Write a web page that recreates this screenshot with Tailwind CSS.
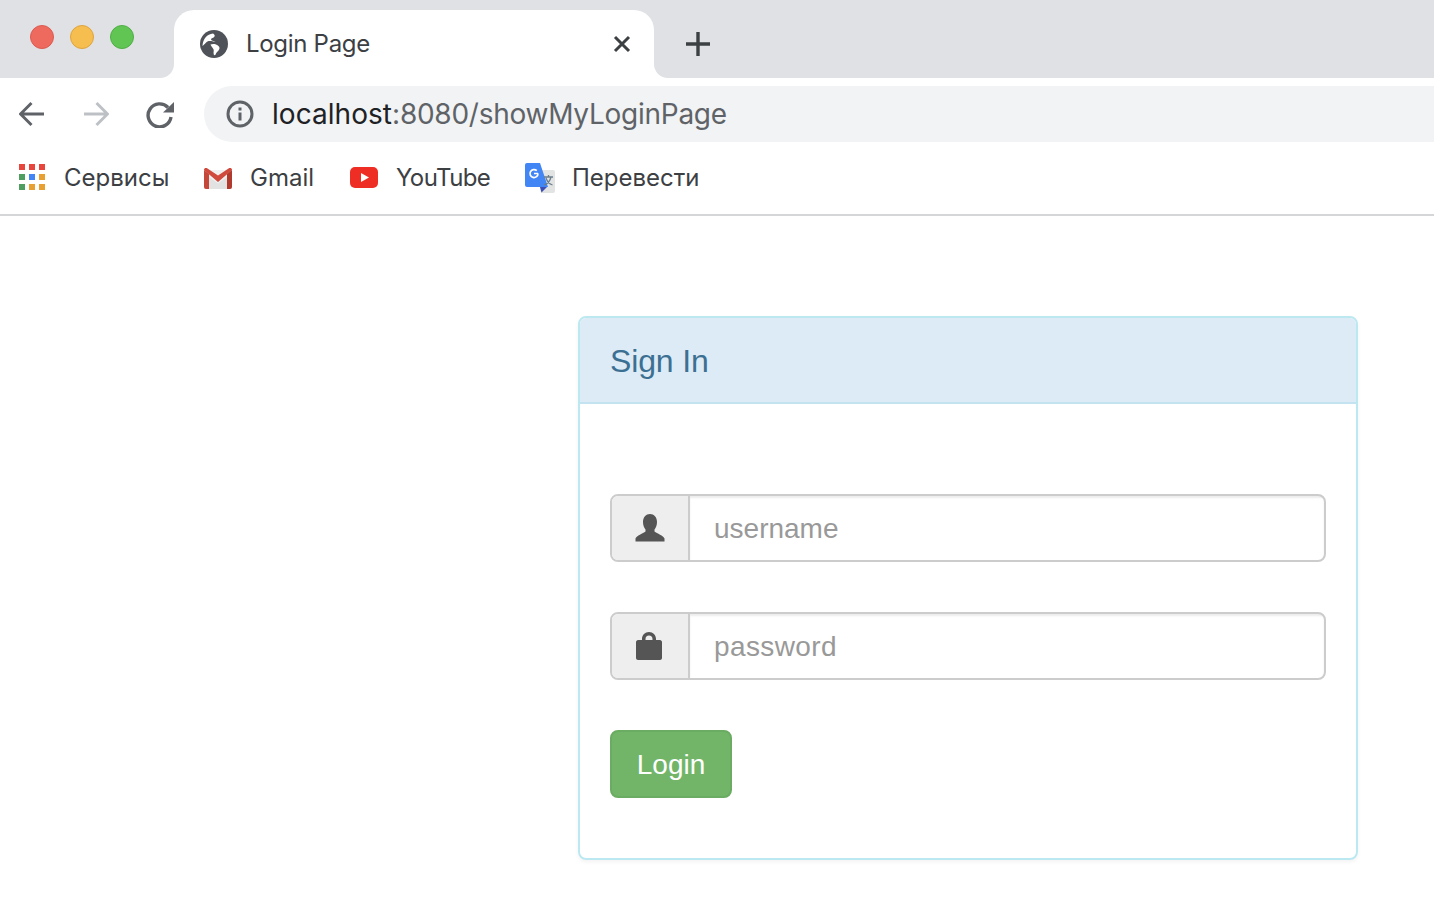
<!DOCTYPE html>
<html lang="en">
<head>
    <meta charset="UTF-8">
    <title>Login Page</title>
    <script src="https://cdn.jsdelivr.net/npm/@tailwindcss/browser@4"></script>
</head>
<body class="bg-white h-[916px] overflow-hidden font-['Liberation_Sans',sans-serif]">
    <!-- tab strip -->
    <div class="flex h-[78px] bg-white">
        <div class="w-[174px] h-full bg-[#dfe1e5] rounded-br-[14px] flex items-start gap-[16px] pl-[30px] pt-[25px]">
            <span class="w-[24px] h-[24px] rounded-full bg-[#ee6a5f] border border-[#dc5a50]"></span>
            <span class="w-[24px] h-[24px] rounded-full bg-[#f6bd4f] border border-[#dfa43d]"></span>
            <span class="w-[24px] h-[24px] rounded-full bg-[#61c554] border border-[#4fae45]"></span>
        </div>
        <div class="w-[480px] h-full bg-[#dfe1e5] pt-[10px]">
            <div class="h-[68px] bg-white rounded-t-[20px] flex items-center pl-[26px] pr-[23px]">
                <svg class="w-[28px] h-[28px] mr-[18px] shrink-0" viewBox="0 0 28 28">
                    <circle cx="14" cy="14" r="14" fill="#4f5258"/>
                    <path d="M2.500 15.500C3 9 7 4 13 3.500c1.500 1 2 2 1.500 3-.8 1.500-3.500 1.500-3.500 3 0 1 2.500 1.500 4.500 2.500-3-.5-6-1.500-8-.5-1.500.8-3 3-5 4.500z" fill="#fff"/>
                    <path d="M10.500 14.500c2.500-1 5-.5 7 .8 2 1.300 2.500 2.500 1.500 4.500-1 1.800-3 2.500-3.500 5-.8.5-1.500.5-1.800-.5-.5-2 .5-3.500-.2-5-.6-1.500-2.500-3-3-4.800z" fill="#fff"/>
                </svg>
                <span class="font-['Inter',sans-serif] text-[24px] text-[#3c4043] flex-1 tracking-[-0.3px]">Login Page</span>
                <svg class="w-[18px] h-[18px]" viewBox="0 0 18 18"><path d="M2 2l14 14M16 2L2 16" stroke="#3c4043" stroke-width="3"/></svg>
            </div>
        </div>
        <div class="flex-1 h-full bg-[#dfe1e5] rounded-bl-[14px] pl-[32px] pt-[32px]">
            <svg class="w-[24px] h-[24px]" viewBox="0 0 24 24"><path d="M12 0v24M0 12h24" stroke="#3c4043" stroke-width="3.400" stroke-linecap="round"/></svg>
        </div>
    </div>
    <!-- toolbar -->
    <div class="flex items-center h-[64px] pt-[8px]">
        <div class="w-[204px] flex items-center pl-[19px] gap-[38px]">
            <svg class="w-[26px] h-[26px]" viewBox="0 0 26 26"><path d="M25 13H2M12.500 2L1.500 13l11 11" fill="none" stroke="#5f6368" stroke-width="3"/></svg>
            <svg class="w-[26px] h-[26px]" viewBox="0 0 26 26"><path d="M1 13h23M13.500 2l11 11-11 11" fill="none" stroke="#bdc1c6" stroke-width="3"/></svg>
            <svg class="w-[28px] h-[28px] -ml-[1px]" viewBox="0 0 28 28"><path d="M22 7.500A11.500 11.500 0 1 0 25 17" fill="none" stroke="#5f6368" stroke-width="3.400"/><path d="M28 2v10.500H17z" fill="#5f6368"/></svg>
        </div>
        <div class="flex-1 h-[56px] bg-[#f1f3f4] rounded-l-full flex items-center pl-[22px]">
            <svg class="w-[28px] h-[28px] mr-[18px]" viewBox="0 0 28 28"><circle cx="14" cy="14" r="12" fill="none" stroke="#5f6368" stroke-width="3"/><path d="M14 12.500v8M14 7.500v3" stroke="#5f6368" stroke-width="3"/></svg>
            <span class="font-['Inter',sans-serif] text-[28px] text-[#5f6368] tracking-[-0.26px]"><span class="text-[#202124] tracking-[0.05px]">localhost</span>:8080/showMyLoginPage</span>
        </div>
    </div>
    <!-- bookmarks -->
    <div class="flex items-center h-[74px] border-b-2 border-[#d5d6d8] pl-[19px] font-['Inter',sans-serif] text-[24px] text-[#3c4043]">
        <div class="grid grid-cols-3 gap-[4px] w-[26px] mr-[19px] -mt-[2px]">
            <i class="h-[6px] bg-[#e8453c]"></i><i class="h-[6px] bg-[#e8453c]"></i><i class="h-[6px] bg-[#e8453c]"></i>
            <i class="h-[6px] bg-[#4e9e5f]"></i><i class="h-[6px] bg-[#4285f4]"></i><i class="h-[6px] bg-[#e8a032]"></i>
            <i class="h-[6px] bg-[#4e9e5f]"></i><i class="h-[6px] bg-[#e8a032]"></i><i class="h-[6px] bg-[#e8a032]"></i>
        </div>
        <span class="w-[140px]">Сервисы</span>
        <svg class="w-[28px] h-[21px] mr-[18px]" viewBox="0 0 28 21">
            <path d="M0 2v17a2 2 0 0 0 2 2h24a2 2 0 0 0 2-2V2z" fill="#efefef"/>
            <path d="M5 21V9l9 6.500L23 9v12z" fill="#e2e2e2"/>
            <path d="M0 2c0-2 2-2.500 3.500-1.500L14 7.500 24.500.5C26-.5 28 0 28 2L14 14z" fill="#d0493d"/>
            <path d="M0 2l5 4v15H2a2 2 0 0 1-2-2z" fill="#c4473a"/>
            <path d="M28 2l-5 4v15h3a2 2 0 0 0 2-2z" fill="#b03a2e"/>
        </svg>
        <span class="w-[100px]">Gmail</span>
        <svg class="w-[28px] h-[21px] mr-[18px] -mt-[1px]" viewBox="0 0 28 21"><rect width="28" height="21" rx="5" fill="#ee2d24"/><path d="M11 6v9l8-4.500z" fill="#fff"/></svg>
        <span class="w-[129px] tracking-[-0.6px]">YouTube</span>
        <svg class="w-[30px] h-[30px] mr-[17px]" viewBox="0 0 30 30">
            <path d="M12 7h16a2 2 0 0 1 2 2v19a2 2 0 0 1-2 2H16z" fill="#e2e3e3"/>
            <path d="M2 0h13l8 24H2a2 2 0 0 1-2-2V2a2 2 0 0 1 2-2z" fill="#4285f4"/>
            <path d="M15 24h7l-5.500 5.500z" fill="#3b4fb5"/>
            <path d="M13 10.500a4 4 0 1 1-1.200-2.800M9 10.500h4" fill="none" stroke="#fff" stroke-width="1.700"/>
            <path d="M19 14h9M23.500 12v2M26 14c-1 4-3.500 7-7 8M21 15c1 3 3.500 6 6.500 7" fill="none" stroke="#6b7f8c" stroke-width="1.300"/>
        </svg>
        <span>Перевести</span>
    </div>
    <!-- login panel -->
    <div class="ml-[578px] mt-[100px] w-[780px] h-[544px] border-2 border-[#bce8f1] rounded-[8px] flex flex-col shadow-[0_2px_4px_rgba(0,0,0,0.05)]">
        <div class="h-[86px] bg-[#dcebf6] border-b-2 border-[#c2e3ef] rounded-t-[6px] pl-[30px] pt-[2px] flex items-center">
            <h3 class="text-[32px] text-[#3c7093] leading-none tracking-[-0.15px]">Sign In</h3>
        </div>
        <form class="flex-1 px-[30px] pt-[90px] flex flex-col">
            <div class="flex h-[68px] w-[716px] border-2 border-[#ccc] rounded-[8px] overflow-hidden">
                <span class="w-[78px] bg-[#eee] border-r-2 border-[#ccc] flex items-center justify-center">
                    <svg class="w-[30px] h-[28px]" viewBox="0 0 30 28"><path d="M15 0c4 0 7 3 7 8 0 3-1 5.500-2.500 7.500v2c2.500 2 9 4 10 7v3H.500v-3c1-3 7.500-5 10-7v-2C9 13.500 8 11 8 8c0-5 3-8 7-8z" fill="#555"/></svg>
                </span>
                <input type="text" placeholder="username" class="flex-1 min-w-0 pl-[24px] pt-[2px] text-[28px] text-[#555] placeholder:text-[#999] outline-none shadow-[inset_0_2px_2px_rgba(0,0,0,0.075)]">
            </div>
            <div class="flex h-[68px] w-[716px] mt-[50px] border-2 border-[#ccc] rounded-[8px] overflow-hidden">
                <span class="w-[78px] bg-[#eee] border-r-2 border-[#ccc] flex items-center justify-center">
                    <svg class="w-[26px] h-[28px] -ml-[2px] -mt-[1px]" viewBox="0 0 26 28"><path d="M6 8V7c0-4 3-7 7-7s7 3 7 7v1h4c1 0 2 1 2 2v16c0 1-1 2-2 2H2c-1 0-2-1-2-2V10c0-1 1-2 2-2zm3.500 0h7V7c0-2.300-1.300-3.500-3.500-3.500S9.500 4.700 9.500 7z" fill="#555" fill-rule="evenodd"/></svg>
                </span>
                <input type="password" placeholder="password" class="flex-1 min-w-0 pl-[24px] pt-[2px] text-[28px] tracking-[0.4px] text-[#555] placeholder:text-[#999] outline-none shadow-[inset_0_2px_2px_rgba(0,0,0,0.075)]">
            </div>
            <button type="button" class="mt-[50px] w-[122px] h-[68px] pt-[2px] bg-[#72b569] border-2 border-[#6aac61] rounded-[8px] text-[28px] text-white">Login</button>
        </form>
    </div>
</body>
</html>
